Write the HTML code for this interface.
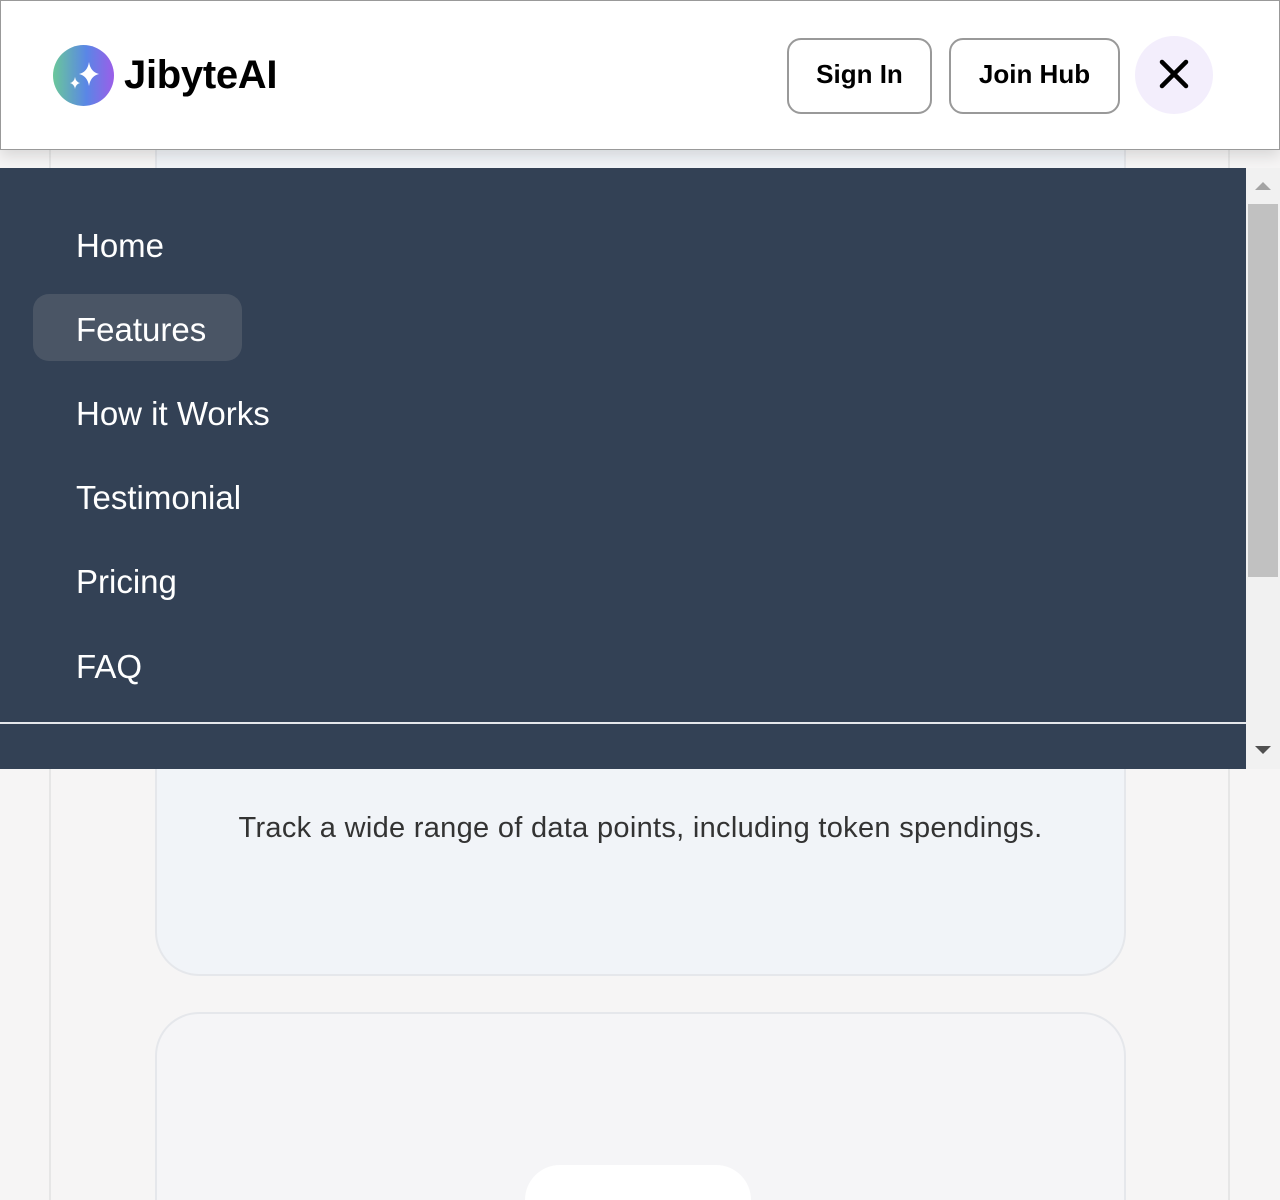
<!DOCTYPE html>
<html style="overflow:hidden;height:1200px"><head><style>
*{margin:0;padding:0;box-sizing:border-box}
body{width:1280px;height:1200px;overflow:hidden;background:#f6f5f5;font-family:"Liberation Sans",sans-serif;position:relative}
.vl{position:absolute;top:0;width:2px;height:1200px;background:#e6e6e6}
.card{position:absolute;left:155px;width:971px;border:2px solid #e5e7eb;border-radius:44px}
header{position:absolute;left:0;top:0;width:1280px;height:150px;background:#fff;border:1px solid #999;box-shadow:0 6px 14px rgba(0,0,0,.12)}
.logo{position:absolute;left:52px;top:44px;width:61px;height:61px;border-radius:50%;background:linear-gradient(90deg,#6ac79a,#5a86e6 55%,#9b5ee8)}
.brand{position:absolute;left:123px;top:52px;font-size:40px;font-weight:bold;color:#000;letter-spacing:-0.3px}
.btn{position:absolute;top:37px;height:76px;border:2px solid #999;border-radius:14px;font-size:26px;font-weight:bold;display:flex;align-items:center;justify-content:center;padding-bottom:4px}
.close{position:absolute;left:1134px;top:35px;width:78px;height:78px;border-radius:50%;background:#f3eefc}
.menu{position:absolute;left:0;top:168px;width:1246px;height:601px;background:#334155}
.menu a{position:absolute;left:76px;color:#fff;font-size:33px;text-decoration:none}
.sb{position:absolute;left:1246px;top:168px;width:34px;height:601px;background:#f1f1f1}
</style></head><body>
<div class="vl" style="left:49px"></div><div class="vl" style="left:1228px"></div>
<div class="card" style="top:100px;height:876px;background:#f1f4f8"></div>
<div style="position:absolute;left:155px;top:812px;width:971px;text-align:center;font-size:29px;color:#333;letter-spacing:0.3px">Track a wide range of data points, including token spendings.</div>
<div class="card" style="top:1012px;height:240px;background:#f5f5f7;border-bottom:none;border-radius:44px 44px 0 0"></div>
<div style="position:absolute;left:525px;top:1165px;width:226px;height:35px;background:#fff;border-radius:40px 40px 0 0"></div>
<header>
<div class="logo"><svg width="61" height="61" viewBox="0 0 61 61"><path d="M36 17 Q37.5 27 46 29 Q37.5 31 36 41 Q34.5 31 26 29 Q34.5 27 36 17Z" fill="#fff"/><path d="M22 32 Q22.8 37 27 38 Q22.8 39 22 44 Q21.2 39 17 38 Q21.2 37 22 32Z" fill="#fff"/></svg></div>
<div class="brand">JibyteAI</div>
<div class="btn" style="left:786px;width:145px">Sign In</div>
<div class="btn" style="left:948px;width:171px">Join Hub</div>
<div class="close"><svg width="78" height="78" viewBox="0 0 78 78"><path d="M27 26L51 50M51 26L27 50" stroke="#000" stroke-width="4.5" stroke-linecap="round"/></svg></div>
</header>
<div class="menu">
<a style="top:59px">Home</a>
<div style="position:absolute;left:33px;top:126px;width:209px;height:67px;border-radius:16px;background:#4a5565"></div>
<a style="top:143px">Features</a>
<a style="top:227px">How it Works</a>
<a style="top:311px">Testimonial</a>
<a style="top:395px">Pricing</a>
<a style="top:480px">FAQ</a>
<div style="position:absolute;left:0;top:554px;width:1246px;height:2px;background:#e5e7eb"></div>
</div>
<div class="sb"><div style="position:absolute;left:2px;top:36px;width:30px;height:373px;background:#c1c1c1"></div>
<div style="position:absolute;left:9px;top:14px;border:8px solid transparent;border-bottom:8px solid #a3a3a3;border-top:0"></div>
<div style="position:absolute;left:9px;top:578px;border:8px solid transparent;border-top:8px solid #505050;border-bottom:0"></div></div>
</body></html>
